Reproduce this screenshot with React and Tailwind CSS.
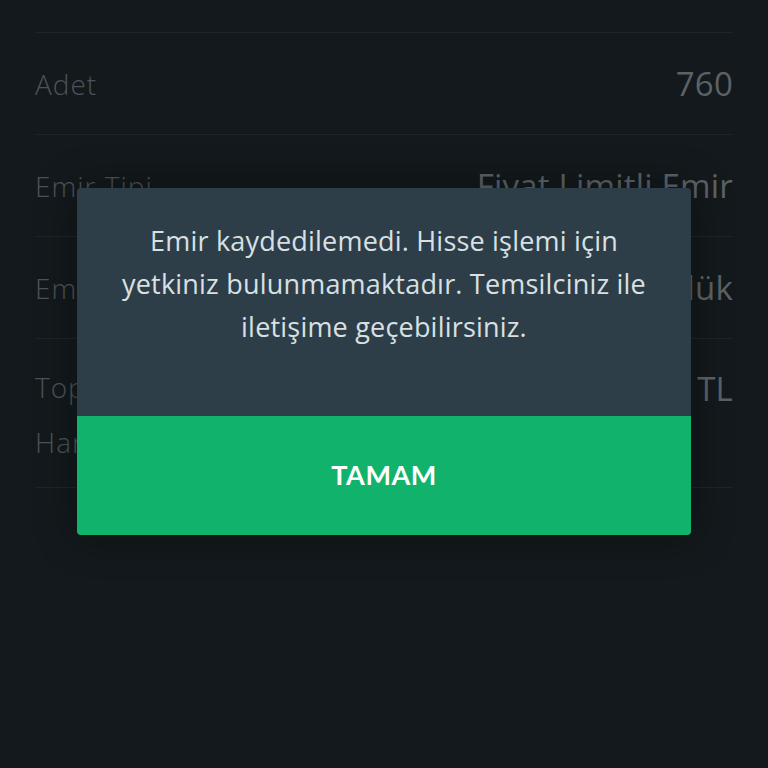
import React from 'react';

const rows = [
  { label: 'Fiyat', value: '16,20 TL' },
  { label: 'Adet', value: '760' },
  { label: 'Emir Tipi', value: 'Fiyat Limitli Emir' },
  { label: 'Emir Süresi', value: 'Günlük' },
];

const OrderRow = ({ label, value }) => (
  <div className="flex h-[102px] items-center justify-between border-b border-[#323e43]">
    <span className="text-[28px] font-light tracking-[1px] text-[#7d8a93]">{label}</span>
    <span className="text-[33px] tracking-[0.2px] text-[#98a3aa]">{value}</span>
  </div>
);

const App = () => {
  return (
    <div className="relative h-[768px] overflow-hidden bg-[#202a2f] px-[35px] font-['Open_Sans',sans-serif]">
      <div className="-mt-[69px]">
        {rows.map(row => (
          <OrderRow key={row.label} {...row} />
        ))}
        <div className="flex h-[149px] justify-between border-b border-[#323e43] pt-[30px]">
          <div className="flex flex-col gap-[19px] text-[28px] font-light leading-[36px] tracking-[1px] text-[#7d8a93]">
            <span>Toplam Tutar</span>
            <span>Harç Dahil</span>
          </div>
          <span className="text-[33px] leading-[40px] tracking-[0.2px] text-[#98a3aa]">12.312,00 TL</span>
        </div>
      </div>

      {/* modal backdrop */}
      <div className="absolute inset-0 flex justify-center bg-black/40 pt-[188px]">
        <div className="flex h-[347px] w-[614px] flex-col overflow-hidden rounded-[4px] shadow-[0_0_40px_rgba(0,0,0,0.35)]">
          <div className="h-[228px] bg-[#2e3e48] pt-[31px] text-center text-[27px] leading-[43px] tracking-[0.2px] text-[#d9e0e3]">
            Emir kaydedilemedi. Hisse işlemi için
            <br />
            yetkiniz bulunmamaktadır. Temsilciniz ile
            <br />
            iletişime geçebilirsiniz.
          </div>
          <button className="flex flex-1 items-center justify-center bg-[#11b36c] font-['Lato',sans-serif] text-[27px] font-bold tracking-[0.5px] text-white">
            TAMAM
          </button>
        </div>
      </div>
    </div>
  );
};

export default App;
